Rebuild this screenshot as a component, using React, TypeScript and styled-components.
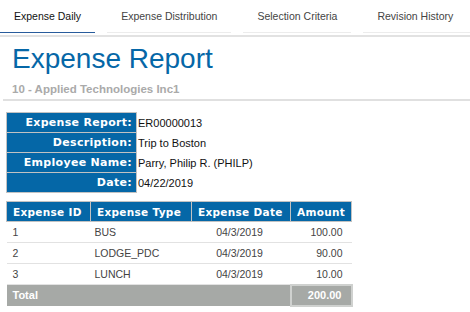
import { createGlobalStyle, styled } from 'styled-components'

const GlobalStyle = createGlobalStyle`
  body {
    margin: 0;
    background: #fff;
    font-family: "Liberation Sans", Arial, sans-serif;
  }
`;

const Tabs = styled.nav`
  display: flex;
  gap: 12px;
  height: 35px;
  border-bottom: 2px solid #e2e2e2;
`;

const Tab = styled.div<{ $active?: boolean }>`
  padding: 0 14px;
  height: 33px;
  box-sizing: border-box;
  display: flex;
  align-items: center;
  font-size: 10.5px;
  color: ${p => (p.$active ? '#111' : '#444')};
  border-bottom: 1px solid ${p => (p.$active ? '#285c9c' : '#ececec')};
  &:last-child {
    flex: 1;
  }
`;

const Header = styled.header`
  margin-left: 3px;
  padding: 6px 0 3px 9px;
  border-bottom: 2px solid #e0e0e0;
`;

const Title = styled.h1`
  margin: 0;
  font-size: 28px;
  line-height: 32px;
  font-weight: 400;
  color: #0567a7;
`;

const Subtitle = styled.div`
  margin-top: 7px;
  font-size: 11.5px;
  line-height: 14px;
  font-weight: 700;
  color: #aaa;
`;

const InfoTable = styled.table`
  margin: 11px 0 0 6px;
  border-collapse: collapse;
`;

const InfoLabel = styled.th`
  width: 130px;
  height: 20px;
  box-sizing: border-box;
  padding: 0 4px 0 0;
  background: #0567a7;
  border: 1px solid #c2c2c2;
  color: #fff;
  text-align: right;
  font-family: "DejaVu Sans", Verdana, sans-serif;
  font-size: 11px;
  font-weight: 700;
  letter-spacing: 0.3px;
`;

const InfoValue = styled.td`
  padding: 0 0 0 1px;
  font-size: 11px;
  color: #111;
`;

const ExpenseTable = styled.table`
  margin: 8px 0 0 6px;
  border-collapse: collapse;
  table-layout: fixed;
  width: 345px;
`;

const HeadCell = styled.th<{ $w: number }>`
  width: ${p => p.$w}px;
  height: 20px;
  box-sizing: border-box;
  padding: 0 5px 0 6px;
  background: #0567a7;
  border: 1px solid #c2c2c2;
  color: #fff;
  text-align: left;
  white-space: nowrap;
  font-family: "DejaVu Sans", Verdana, sans-serif;
  font-size: 10.5px;
  font-weight: 700;
  letter-spacing: 0.3px;
`;

const Row = styled.tr`
  border-bottom: 1px solid #e2e2e2;
`;

const Cell = styled.td<{ $align?: string; $pad?: number }>`
  height: 21px;
  box-sizing: border-box;
  padding: 0 9px 0 ${p => p.$pad ?? 6}px;
  text-align: ${p => p.$align ?? 'left'};
  font-size: 10.5px;
  color: #444;
`;

const TotalRow = styled.tr`
  background: #a6a9a6;
`;

const TotalCell = styled.td<{ $amount?: boolean }>`
  height: 21px;
  box-sizing: border-box;
  padding: ${p => (p.$amount ? '0 9px 0 0' : '0 6px')};
  text-align: ${p => (p.$amount ? 'right' : 'left')};
  border: ${p => (p.$amount ? '2px solid #cfd1cf' : 'none')};
  color: #fff;
  font-size: 11px;
  font-weight: 700;
`;

const info = [
  ['Expense Report:', 'ER00000013'],
  ['Description:', 'Trip to Boston'],
  ['Employee Name:', 'Parry, Philip R. (PHILP)'],
  ['Date:', '04/22/2019'],
];

const lines = [
  { id: '1', type: 'BUS', date: '04/3/2019', amount: '100.00' },
  { id: '2', type: 'LODGE_PDC', date: '04/3/2019', amount: '90.00' },
  { id: '3', type: 'LUNCH', date: '04/3/2019', amount: '10.00' },
];

const tabs = ['Expense Daily', 'Expense Distribution', 'Selection Criteria', 'Revision History'];

const App = () => {
  return (
    <>
      <GlobalStyle />
      <Tabs>
        {tabs.map((t, i) => (
          <Tab key={t} $active={i === 0}>{t}</Tab>
        ))}
      </Tabs>
      <Header>
        <Title>Expense Report</Title>
        <Subtitle>10 - Applied Technologies Inc1</Subtitle>
      </Header>
      <InfoTable>
        <tbody>
          {info.map(([label, value]) => (
            <tr key={label}>
              <InfoLabel>{label}</InfoLabel>
              <InfoValue>{value}</InfoValue>
            </tr>
          ))}
        </tbody>
      </InfoTable>
      <ExpenseTable>
        <thead>
          <tr>
            <HeadCell $w={84}>Expense ID</HeadCell>
            <HeadCell $w={101}>Expense Type</HeadCell>
            <HeadCell $w={99}>Expense Date</HeadCell>
            <HeadCell $w={61}>Amount</HeadCell>
          </tr>
        </thead>
        <tbody>
          {lines.map(l => (
            <Row key={l.id}>
              <Cell>{l.id}</Cell>
              <Cell $pad={4}>{l.type}</Cell>
              <Cell $align="center">{l.date}</Cell>
              <Cell $align="right">{l.amount}</Cell>
            </Row>
          ))}
          <TotalRow>
            <TotalCell colSpan={3}>Total</TotalCell>
            <TotalCell $amount>200.00</TotalCell>
          </TotalRow>
        </tbody>
      </ExpenseTable>
    </>
  );
};

export default App;
